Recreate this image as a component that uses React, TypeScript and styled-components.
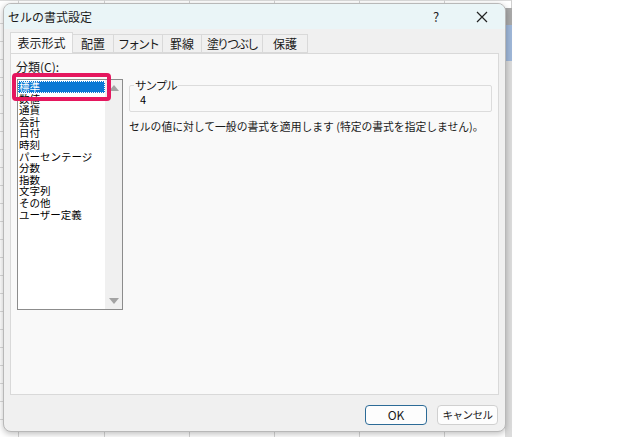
import React from "react";
import styled, { createGlobalStyle } from "styled-components";

const GlobalStyle = createGlobalStyle`
  html, body {
    margin: 0;
    padding: 0;
    background: #ffffff;
  }
  body {
    font-family: "Noto Sans CJK JP", "Noto Sans", sans-serif;
  }
`;

const Screen = styled.div`
  position: relative;
  width: 640px;
  height: 437px;
  overflow: hidden;
  background: #ffffff;
`;

const Sheet = styled.div`
  width: 512px;
  height: 437px;
  background-color: #ffffff;
  background-image:
    repeating-linear-gradient(to right, transparent 0, transparent 84px, #d4d4d4 84px, #d4d4d4 85px),
    repeating-linear-gradient(to bottom, transparent 0, transparent 17px, #dadada 17px, #dadada 18px);
  background-position: 20px 0, 0 6px;
  border-right: 1px solid #cfcfcf;
  box-sizing: border-box;
`;

const RowMark = styled.div<{ $top: number; $height: number; $color: string }>`
  position: absolute;
  left: 505px;
  width: 7px;
  top: ${(p) => p.$top}px;
  height: ${(p) => p.$height}px;
  background: ${(p) => p.$color};
`;

const Dialog = styled.div`
  position: absolute;
  left: 3px;
  top: 3px;
  width: 503px;
  height: 429px;
  box-sizing: border-box;
  border: 1px solid #b8b8b8;
  border-radius: 8px;
  background: #f0f0f0;
  box-shadow: 0 2px 6px rgba(0, 0, 0, 0.25);
  overflow: hidden;
  display: flex;
  flex-direction: column;
`;

const TitleBar = styled.div`
  height: 25px;
  background: #eaf5f7;
  display: flex;
  align-items: center;
  padding-left: 4px;
  font-size: 12px;
  color: #1a1a1a;
`;

const Title = styled.span`
  flex: 1;
`;

const TitleButton = styled.span<{ $w: number }>`
  width: ${(p) => p.$w}px;
  text-align: center;
  font-size: 13px;
  color: #222;
  display: flex;
  justify-content: center;
`;

const TabRow = styled.div`
  display: flex;
  align-items: flex-end;
  margin: 4px 6px 0;
  height: 20px;
  position: relative;
  z-index: 1;
`;

const Tab = styled.div<{ $active?: boolean; $w: number; $tight?: boolean }>`
  width: ${(p) => p.$w}px;
  height: ${(p) => (p.$active ? 21 : 19)}px;
  box-sizing: border-box;
  font-size: 12px;
  line-height: ${(p) => (p.$active ? 19 : 18)}px;
  letter-spacing: ${(p) => (p.$tight ? "-2px" : "0")};
  white-space: nowrap;
  text-align: center;
  color: #1a1a1a;
  background: ${(p) => (p.$active ? "#f9f9f9" : "#f0f0f0")};
  border: 1px solid #d9d9d9;
  border-bottom: ${(p) => (p.$active ? "none" : "1px solid #d9d9d9")};
  margin-right: -1px;
`;

const Panel = styled.div`
  margin: 0 6px;
  height: 342px;
  box-sizing: border-box;
  border: 1px solid #d9d9d9;
  background: #f9f9f9;
  display: grid;
  grid-template-columns: 106px 1fr;
  column-gap: 6px;
  padding: 6px 6px 0 6px;
`;

const LeftCol = styled.div`
  display: flex;
  flex-direction: column;
`;

const Label = styled.div`
  font-size: 12px;
  line-height: 14px;
  color: #1a1a1a;
  margin-left: -1px;
  height: 19px;
`;

const ListBox = styled.div`
  position: relative;
  height: 231px;
  box-sizing: border-box;
  border: 1px solid #8c8c8c;
  background: #ffffff;
  display: flex;
`;

const Items = styled.div`
  flex: 1;
  padding-top: 1px;
`;

const Item = styled.div<{ $selected?: boolean }>`
  font-size: 10.5px;
  line-height: 11.6px;
  height: 11.6px;
  padding-left: 1px;
  white-space: nowrap;
  color: ${(p) => (p.$selected ? "#ffffff" : "#000000")};
  background: ${(p) => (p.$selected ? "#0a78d4" : "transparent")};
  outline: ${(p) => (p.$selected ? "1px dotted #ffffff" : "none")};
  outline-offset: -1px;
`;

const ScrollBar = styled.div`
  width: 17px;
  background: #f0f0f0;
  display: flex;
  flex-direction: column;
  justify-content: space-between;
  align-items: center;
  padding: 5px 0;
`;

const Arrow = styled.div<{ $down?: boolean }>`
  width: 0;
  height: 0;
  border-left: 5px solid transparent;
  border-right: 5px solid transparent;
  ${(p) =>
    p.$down
      ? "border-top: 6px solid #a3a3a3;"
      : "border-bottom: 6px solid #a3a3a3;"}
`;

const Highlight = styled.div`
  position: absolute;
  left: -6px;
  top: -7px;
  width: 91px;
  height: 20px;
  border: 4px solid #e5175f;
  border-radius: 4px;
  pointer-events: none;
`;

const RightCol = styled.div`
  padding-top: 19px;
  display: flex;
  flex-direction: column;
`;

const Group = styled.fieldset`
  margin: 0;
  padding: 0 10px 0 10px;
  height: 33px;
  box-sizing: border-box;
  border: 1px solid #dcdcdc;
  border-radius: 2px;
  width: 363px;
`;

const Legend = styled.legend`
  font-size: 11.5px;
  line-height: 12px;
  letter-spacing: -1px;
  padding: 0 1px;
  margin-left: -6px;
  color: #1a1a1a;
`;

const SampleValue = styled.div`
  font-size: 11px;
  line-height: 14px;
  color: #000;
  margin-top: 1px;
`;

const Description = styled.div`
  font-size: 10.8px;
  line-height: 16px;
  margin-top: 6px;
  color: #1a1a1a;
  white-space: nowrap;
`;

const Footer = styled.div`
  flex: 1;
  display: flex;
  justify-content: flex-end;
  align-items: flex-start;
  gap: 10px;
  padding: 10px 7px 0 0;
`;

const Button = styled.button<{ $primary?: boolean }>`
  width: ${(p) => (p.$primary ? 62 : 61)}px;
  height: 20px;
  box-sizing: border-box;
  border-radius: 4px;
  border: 1px solid ${(p) => (p.$primary ? "#2c6b97" : "#d0d0d0")};
  background: #fdfdfd;
  font-family: "Noto Sans CJK JP", sans-serif;
  font-size: ${(p) => (p.$primary ? 12 : 10.5)}px;
  letter-spacing: ${(p) => (p.$primary ? "0" : "-0.5px")};
  white-space: nowrap;
  line-height: 16px;
  padding: 0;
  color: #1a1a1a;
`;

const categories = [
  "標準",
  "数値",
  "通貨",
  "会計",
  "日付",
  "時刻",
  "パーセンテージ",
  "分数",
  "指数",
  "文字列",
  "その他",
  "ユーザー定義",
];

const tabs = [
  { label: "表示形式", w: 63, tight: false },
  { label: "配置", w: 42, tight: false },
  { label: "フォント", w: 50, tight: true },
  { label: "罫線", w: 40, tight: false },
  { label: "塗りつぶし", w: 62, tight: true },
  { label: "保護", w: 46, tight: false },
];

export default function App() {
  return (
    <>
      <GlobalStyle />
      <Screen>
        <Sheet />
        <RowMark $top={8} $height={17} $color="#a9a9a9" />
        <RowMark $top={25} $height={36} $color="#9fb7d8" />
        <RowMark $top={61} $height={380} $color="#dcdcdc" />
        <Dialog>
          <TitleBar>
            <Title>セルの書式設定</Title>
            <TitleButton $w={46}>?</TitleButton>
            <TitleButton $w={46}>
              <svg width="12" height="12" viewBox="0 0 12 12">
                <path d="M1 1 L11 11 M11 1 L1 11" stroke="#222" strokeWidth="1.2" />
              </svg>
            </TitleButton>
          </TitleBar>
          <TabRow>
            {tabs.map((t, i) => (
              <Tab key={t.label} $active={i === 0} $w={t.w} $tight={t.tight}>
                {t.label}
              </Tab>
            ))}
          </TabRow>
          <Panel>
            <LeftCol>
              <Label>分類(C):</Label>
              <ListBox>
                <Items>
                  {categories.map((c, i) => (
                    <Item key={c} $selected={i === 0}>
                      {c}
                    </Item>
                  ))}
                </Items>
                <ScrollBar>
                  <Arrow />
                  <Arrow $down />
                </ScrollBar>
                <Highlight />
              </ListBox>
            </LeftCol>
            <RightCol>
              <Group>
                <Legend>サンプル</Legend>
                <SampleValue>4</SampleValue>
              </Group>
              <Description>
                セルの値に対して一般の書式を適用します (特定の書式を指定しません)。
              </Description>
            </RightCol>
          </Panel>
          <Footer>
            <Button $primary>OK</Button>
            <Button>キャンセル</Button>
          </Footer>
        </Dialog>
      </Screen>
    </>
  );
}
